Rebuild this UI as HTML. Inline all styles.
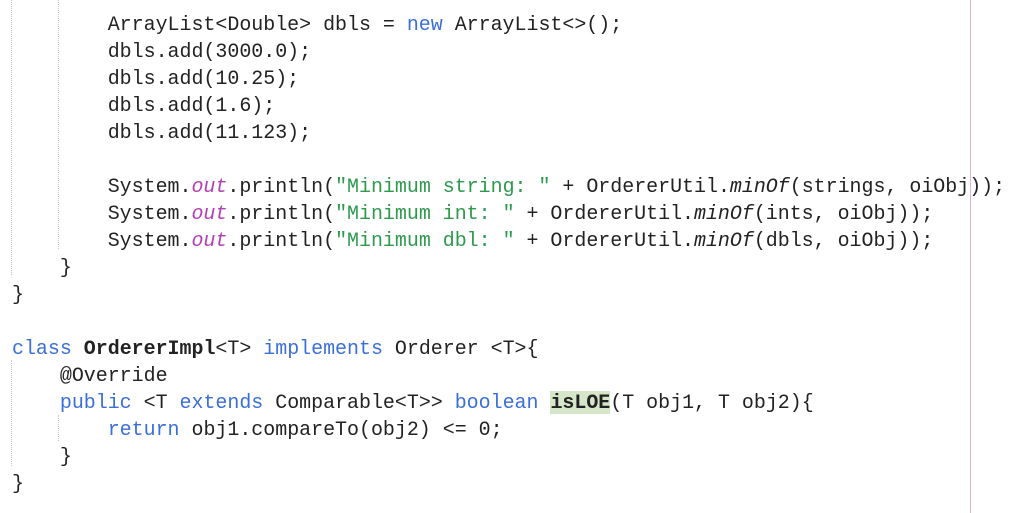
<!DOCTYPE html>
<html><head><style>
body{margin:0;width:1014px;height:513px;background:#fff;overflow:hidden;position:relative}
pre{position:absolute;left:12px;top:11px;margin:0;font-family:"Liberation Mono",monospace;font-size:19.95px;line-height:27px;color:#222}
.k{color:#3a6fd8}.o{color:#b43fb4;font-style:italic}.s{color:#2d9a4e}.i{font-style:italic}.b{font-weight:bold}
.h{background:#d6e6c8;font-weight:bold}
.g{position:absolute;width:0;border-left:1px dotted #c8c8c8}
.m{position:absolute;left:970px;top:0;width:1px;height:513px;background:#ddb6d6}
</style></head><body>
<div class="g" style="left:11px;top:0;height:275px"></div>
<div class="g" style="left:58px;top:0;height:249px"></div>
<div class="g" style="left:11px;top:360px;height:106px"></div>
<div class="g" style="left:58px;top:415px;height:26px"></div>
<div class="m"></div>
<pre>        ArrayList&lt;Double&gt; dbls = <span class="k">new</span> ArrayList&lt;&gt;();
        dbls.add(3000.0);
        dbls.add(10.25);
        dbls.add(1.6);
        dbls.add(11.123);

        System.<span class="o">out</span>.println(<span class="s">"Minimum string: "</span> + OrdererUtil.<span class="i">minOf</span>(strings, oiObj));
        System.<span class="o">out</span>.println(<span class="s">"Minimum int: "</span> + OrdererUtil.<span class="i">minOf</span>(ints, oiObj));
        System.<span class="o">out</span>.println(<span class="s">"Minimum dbl: "</span> + OrdererUtil.<span class="i">minOf</span>(dbls, oiObj));
    }
}

<span class="k">class</span> <span class="b">OrdererImpl</span>&lt;T&gt; <span class="k">implements</span> Orderer &lt;T&gt;{
    @Override
    <span class="k">public</span> &lt;T <span class="k">extends</span> Comparable&lt;T&gt;&gt; <span class="k">boolean</span> <span class="h">isLOE</span>(T obj1, T obj2){
        <span class="k">return</span> obj1.compareTo(obj2) &lt;= 0;
    }
}</pre>
</body></html>
